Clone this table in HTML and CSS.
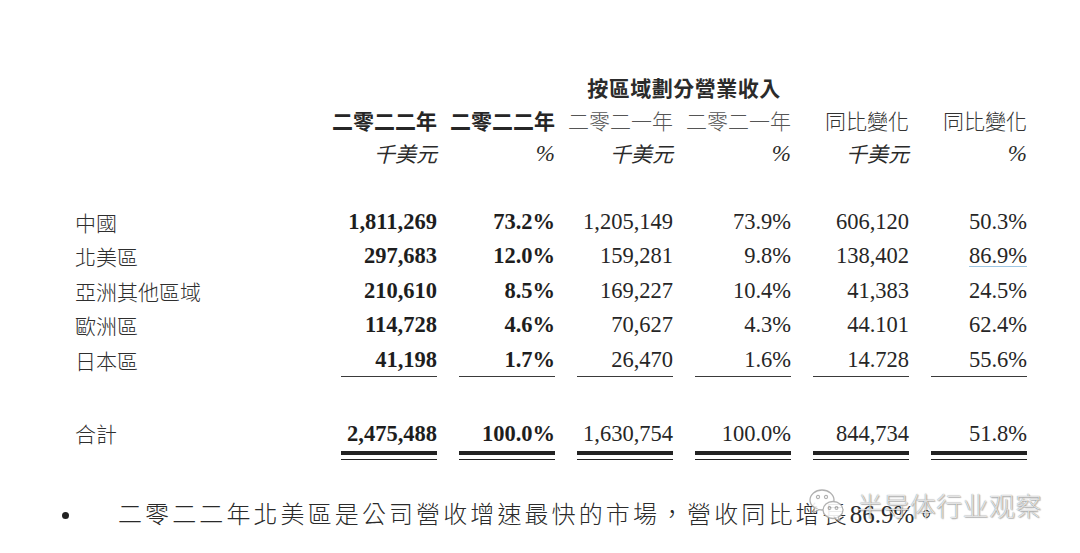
FILE: index.html
```html
<!DOCTYPE html>
<html lang="zh-Hant">
<head>
<meta charset="utf-8">
<title>按區域劃分營業收入</title>
<link rel="stylesheet" href="styles.css">
</head>
<body>
<div class="page">
  <div class="table">
    <div class="row head title-row">
      <div class="title">按區域劃分營業收入</div>
    </div>
    <div class="row head">
      <div class="lab"></div>
      <div class="h b">二零二二年</div>
      <div class="h b">二零二二年</div>
      <div class="h l">二零二一年</div>
      <div class="h l">二零二一年</div>
      <div class="h r">同比變化</div>
      <div class="h r">同比變化</div>
    </div>
    <div class="row head">
      <div class="lab"></div>
      <div class="u cjk">千美元</div>
      <div class="u pct">%</div>
      <div class="u cjk">千美元</div>
      <div class="u pct">%</div>
      <div class="u cjk">千美元</div>
      <div class="u pct">%</div>
    </div>
    <div class="spacer"></div>
    <div class="row data">
      <div class="lab">中國</div>
      <div class="n b">1,811,269</div><div class="n b">73.2%</div>
      <div class="n">1,205,149</div><div class="n">73.9%</div>
      <div class="n">606,120</div><div class="n">50.3%</div>
    </div>
    <div class="row data">
      <div class="lab">北美區</div>
      <div class="n b">297,683</div><div class="n b">12.0%</div>
      <div class="n">159,281</div><div class="n">9.8%</div>
      <div class="n">138,402</div><div class="n"><span class="link">86.9%</span></div>
    </div>
    <div class="row data">
      <div class="lab">亞洲其他區域</div>
      <div class="n b">210,610</div><div class="n b">8.5%</div>
      <div class="n">169,227</div><div class="n">10.4%</div>
      <div class="n">41,383</div><div class="n">24.5%</div>
    </div>
    <div class="row data">
      <div class="lab">歐洲區</div>
      <div class="n b">114,728</div><div class="n b">4.6%</div>
      <div class="n">70,627</div><div class="n">4.3%</div>
      <div class="n">44.101</div><div class="n">62.4%</div>
    </div>
    <div class="row data last">
      <div class="lab">日本區</div>
      <div class="n b">41,198</div><div class="n b">1.7%</div>
      <div class="n">26,470</div><div class="n">1.6%</div>
      <div class="n">14.728</div><div class="n">55.6%</div>
    </div>
    <div class="row data total">
      <div class="lab">合計</div>
      <div class="n b">2,475,488</div><div class="n b">100.0%</div>
      <div class="n">1,630,754</div><div class="n">100.0%</div>
      <div class="n">844,734</div><div class="n">51.8%</div>
    </div>
  </div>

  <div class="bullet">
    <span class="dot"></span>
    <p class="btext">二零二二年北美區是公司營收增速最快的市場，營收同比增長<span class="num">86.9%</span>。</p>
  </div>

  <div class="watermark">
    <svg class="wm-icon" width="36" height="34" viewBox="0 0 36 34">
      <ellipse cx="13" cy="12" rx="12" ry="10" fill="#fff" stroke="#a8a8a8" stroke-width="1.3"/>
      <path d="M6 20 L4 25 L10 21.5" fill="#fff" stroke="#a8a8a8" stroke-width="1.3" stroke-linejoin="round"/>
      <circle cx="9" cy="9" r="1.6" fill="none" stroke="#a8a8a8" stroke-width="1.1"/>
      <circle cx="17" cy="9" r="1.6" fill="none" stroke="#a8a8a8" stroke-width="1.1"/>
      <ellipse cx="24" cy="22" rx="10" ry="8.5" fill="#fff" stroke="#a8a8a8" stroke-width="1.3"/>
      <path d="M29 29 L31 33 L25.5 30.3" fill="#fff" stroke="#a8a8a8" stroke-width="1.3" stroke-linejoin="round"/>
      <circle cx="20.5" cy="20" r="1.4" fill="none" stroke="#a8a8a8" stroke-width="1.1"/>
      <circle cx="27.5" cy="20" r="1.4" fill="none" stroke="#a8a8a8" stroke-width="1.1"/>
    </svg>
    <span class="wm-text">半导体行业观察</span>
  </div>
</div>
</body>
</html>
```

FILE: styles.css
```css
html, body {
  margin: 0;
  padding: 0;
  background: #ffffff;
}

.page {
  position: relative;
  width: 1080px;
  height: 553px;
  overflow: hidden;
  color: #231f20;
}

.table {
  padding: 71px 0 0 75px;
}

.row {
  display: grid;
  grid-template-columns: 244px repeat(6, 96px);
  column-gap: 22px;
}

.head {
  height: 33px;
  line-height: 33px;
  font-family: "Noto Sans CJK TC", "Noto Sans CJK SC", sans-serif;
  font-size: 21px;
}

.title {
  grid-column: 4 / 6;
  justify-self: center;
  white-space: nowrap;
  font-weight: 700;
  color: #2b2b2b;
  letter-spacing: 0.5px;
}

.h {
  text-align: right;
  white-space: nowrap;
  direction: rtl;
}

.h.b { font-weight: 700; color: #262626; }
.h.l { font-weight: 300; color: #555555; }
.h.r { font-weight: 300; color: #333333; }

.u {
  text-align: right;
  white-space: nowrap;
}

.u.cjk {
  font-style: italic;
  font-weight: 400;
  color: #2a2a2a;
}

.u.pct {
  font-family: "Liberation Serif", serif;
  font-style: italic;
  font-size: 23px;
  color: #2a2a2a;
}

.spacer {
  height: 34.5px;
}

.data {
  height: 34.5px;
  line-height: 34.5px;
}

.lab {
  font-family: "Noto Sans CJK TC", "Noto Sans CJK SC", sans-serif;
  font-size: 21px;
  font-weight: 300;
  color: #2e2e2e;
  white-space: nowrap;
}

.n {
  font-family: "Liberation Serif", serif;
  font-size: 22.5px;
  text-align: right;
  white-space: nowrap;
  color: #262626;
}

.n.b {
  font-weight: 700;
  color: #1e1e1e;
}

.last .n {
  border-bottom: 1px solid #3a3a3a;
  height: 34.5px;
  box-sizing: border-box;
}

.total {
  margin-top: 39px;
  height: 44px;
}

.total .n {
  box-sizing: border-box;
  height: 44px;
  line-height: 36px;
  border-bottom: 1.5px solid #222;
  position: relative;
}

.total .n::after {
  content: "";
  position: absolute;
  left: 0;
  right: 0;
  top: 35px;
  height: 4px;
  background: #222;
}

.link {
  border-bottom: 1px solid #9ec7e4;
  line-height: 20px;
  display: inline-block;
}

.bullet {
  display: flex;
  align-items: center;
  margin-top: 32px;
  padding-left: 62px;
  height: 40px;
}

.dot {
  width: 7px;
  height: 7px;
  border-radius: 50%;
  background: #222;
  flex: none;
  margin-top: 6px;
}

.btext {
  margin: 0 0 0 49px;
  font-family: "Noto Sans CJK TC", "Noto Sans CJK SC", sans-serif;
  font-size: 24px;
  font-weight: 300;
  letter-spacing: 3.1px;
  color: #2a2a2a;
  white-space: nowrap;
}

.btext .num {
  font-family: "Liberation Serif", serif;
  font-size: 25px;
  letter-spacing: 0;
}

.watermark {
  position: absolute;
  left: 809px;
  top: 486px;
  display: flex;
  align-items: center;
  gap: 12px;
}

.wm-icon {
  display: block;
  opacity: 0.9;
}

.wm-text {
  font-family: "Noto Sans CJK SC", sans-serif;
  font-size: 26px;
  font-weight: 300;
  letter-spacing: 0.4px;
  color: rgba(255, 255, 255, 0.78);
  text-shadow: 0 0 1px rgba(0, 0, 0, 0.55), 1px 1px 1px rgba(0, 0, 0, 0.25);
}
```
